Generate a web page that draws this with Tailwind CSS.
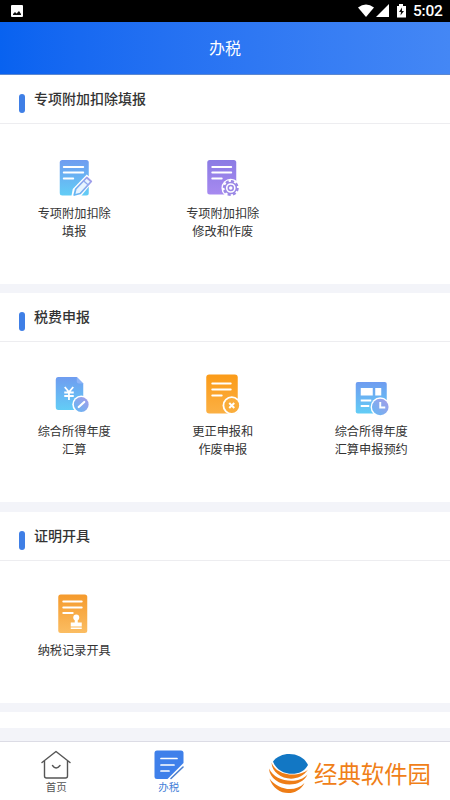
<!DOCTYPE html>
<html lang="zh-CN">
<head>
<meta charset="utf-8">
<meta name="viewport" content="width=device-width, initial-scale=1">
<title>办税</title>
<script src="https://cdn.jsdelivr.net/npm/@tailwindcss/browser@4"></script>
</head>
<body class="w-[450px] h-[800px] overflow-hidden flex flex-col bg-[#f3f4f9] font-['Noto_Sans_CJK_SC',sans-serif] text-[#333]">
<svg class="absolute size-0" aria-hidden="true">
  <defs>
    <linearGradient id="blue" x1="0" y1="0" x2="0" y2="1"><stop offset="0" stop-color="#6f9cf0"/><stop offset="1" stop-color="#62cdf6"/></linearGradient>
    <linearGradient id="violet" x1="0" y1="0" x2="0" y2="1"><stop offset="0" stop-color="#8b7be4"/><stop offset="1" stop-color="#a78af0"/></linearGradient>
    <linearGradient id="orange" x1="0" y1="0" x2="0" y2="1"><stop offset="0" stop-color="#fb9b18"/><stop offset="1" stop-color="#fbb044"/></linearGradient>
    <linearGradient id="amber" x1="0" y1="0" x2="0" y2="1"><stop offset="0" stop-color="#f59a2c"/><stop offset="1" stop-color="#fbbd62"/></linearGradient>
    <linearGradient id="pen" x1="1" y1="0" x2="0" y2="1"><stop offset="0" stop-color="#a79be8"/><stop offset="1" stop-color="#62b8f4"/></linearGradient>
  </defs>
</svg>

<div class="h-[22px] shrink-0 bg-black flex items-center justify-between pl-[11px] pr-[8px]">
  <svg class="w-3 h-3" viewBox="0 0 12 12"><rect width="12" height="12" rx="1" fill="#fff"/><path d="M2 10V9l2-2 1.500 1.500L8 6l2 3v1z" fill="#111"/></svg>
  <div class="flex items-center">
    <svg class="w-[49px] h-[14px]" viewBox="0 0 49 14" fill="#fff"><path d="M0 3.500Q8 -2.500 16 3.500L8 13z"/><path d="M31 0v13H18z"/><path d="M39 2h2V0h4v2h3v11.500h-9z"/><path d="M44 3.500 41 8h2l-.5 3.500L46 7h-2z" fill="#111"/></svg>
    <span class="ml-[6px] w-[29px] text-[15.5px] leading-[22px] font-medium text-white font-['Roboto',sans-serif] tracking-[-0.2px]">5:02</span>
  </div>
</div>

<header class="h-[53px] shrink-0 bg-linear-to-r from-[#0862f0] to-[#4487f5] border-b border-[#5c88d0] flex items-center justify-center text-white text-[16px] leading-none pb-[2px]">办税</header>

<main class="flex flex-col shrink-0">
  <section class="h-[209px] bg-white">
    <div class="h-[49px] border-b border-[#ededf0] flex items-start pl-[19px]">
      <i class="block w-[5.5px] h-[19px] mt-[19px] rounded-full bg-[#3f7fe6]"></i>
      <h2 class="ml-[9.5px] mt-[12px] text-[14px] leading-[22px] font-medium">专项附加扣除填报</h2>
    </div>
    <div class="grid grid-cols-[repeat(3,148.5px)] pt-[30px] text-center text-[12.2px] leading-[18px]">
      <div class="flex flex-col items-center">
        <svg class="w-[50px] h-[48px]" viewBox="49.25 154 50 48"><rect x="60" y="160" width="29" height="35.500" rx="2.500" fill="url(#blue)"/><path d="M64 167h19.500M64 172.500h19.500M64 178.500h9.500" stroke="#fff" stroke-width="1.900" stroke-linecap="round"/><path d="m71.500 197 1.500-8L87 174.500l7 6-13 16z" fill="#fff"/><path d="m74.500 195 1.500-6L87 177.500l4.500 4L80.500 193.500z" fill="#e8f4ff" stroke="url(#pen)" stroke-width="1.800" stroke-linejoin="round"/><path d="m84 181 4.500 4" stroke="#90aaf0" stroke-width="1.400"/></svg>
        <p class="mt-[2px]">专项附加扣除<br>填报</p>
      </div>
      <div class="flex flex-col items-center">
        <svg class="w-[50px] h-[48px]" viewBox="197.750 154 50 48"><rect x="207" y="160" width="29" height="34.500" rx="2.500" fill="url(#violet)"/><path d="M212 167h19M212 172.500h19M212 178.500h9.500" stroke="#fff" stroke-width="1.900" stroke-linecap="round"/><circle cx="230.500" cy="188" r="9.300" fill="#fff"/><circle cx="230.500" cy="188" r="6.600" fill="none" stroke="#9b88e6" stroke-width="2.800" stroke-dasharray="2.960 2.223"/><circle cx="230.500" cy="188" r="5.600" fill="#fff" stroke="#9b88e6" stroke-width="1.500"/><circle cx="230.500" cy="188" r="2.500" fill="#fff" stroke="#9b88e6" stroke-width="1.500"/></svg>
        <p class="mt-[2px]">专项附加扣除<br>修改和作废</p>
      </div>
    </div>
  </section>

  <section class="mt-[9px] h-[209px] bg-white">
    <div class="h-[49px] border-b border-[#ededf0] flex items-start pl-[19px]">
      <i class="block w-[5.5px] h-[19px] mt-[19px] rounded-full bg-[#3f7fe6]"></i>
      <h2 class="ml-[9.5px] mt-[12px] text-[14px] leading-[22px] font-medium">税费申报</h2>
    </div>
    <div class="grid grid-cols-[repeat(3,148.5px)] pt-[30px] text-center text-[12.2px] leading-[17.5px]">
      <div class="flex flex-col items-center">
        <svg class="w-[50px] h-[48px]" viewBox="49.25 372 50 48"><path d="M58.500 377H77l6.500 6.500V407q0 3-3 3h-22q-2.500 0-2.500-3v-27q0-3 2.500-3z" fill="url(#blue)"/><path d="M77 377v4.500q0 2 2 2h4.500z" fill="#8db4f7"/><path d="m65 387 4.200 5 4.300-5M69.200 392v8M64.500 392.500h9.500M64.500 396h9.500" fill="none" stroke="#fff" stroke-width="1.800"/><circle cx="81.500" cy="404.500" r="9" fill="#fff"/><circle cx="81.500" cy="404.500" r="7.400" fill="url(#pen)"/><path d="m79 407 5.500-5" stroke="#fff" stroke-width="2.200" stroke-linecap="round"/></svg>
        <p class="mt-[3px]">综合所得年度<br>汇算</p>
      </div>
      <div class="flex flex-col items-center">
        <svg class="w-[50px] h-[48px]" viewBox="197.750 372 50 48"><rect x="206" y="374.500" width="31.500" height="39" rx="3" fill="url(#orange)"/><path d="M212 383.500h18.500M212 389.500h18.500M212 395.500h9.500" stroke="#fff" stroke-width="1.900" stroke-linecap="round"/><circle cx="231.500" cy="405.500" r="9.200" fill="#fff"/><circle cx="231.500" cy="405.500" r="7.400" fill="#faad3b"/><path d="m229 403 5 5m0-5-5 5" stroke="#fff" stroke-width="2"/></svg>
        <p class="mt-[3px]">更正申报和<br>作废申报</p>
      </div>
      <div class="flex flex-col items-center">
        <svg class="w-[50px] h-[48px]" viewBox="346.25 372 50 48"><rect x="356" y="382" width="31" height="31.500" rx="2" fill="url(#blue)"/><path d="M361 388h12v7.500h-12zM375.500 388h6v7.500h-6z" fill="#fff"/><path d="M361 400.500h10.500M361 406h8.500" stroke="#fff" stroke-width="1.800"/><circle cx="380.500" cy="407" r="9.700" fill="#fff"/><circle cx="380.500" cy="407" r="8.300" fill="url(#pen)"/><path d="M380.500 402v5.500h5" fill="none" stroke="#fff" stroke-width="1.900"/></svg>
        <p class="mt-[3px]">综合所得年度<br>汇算申报预约</p>
      </div>
    </div>
  </section>

  <section class="mt-[10px] h-[191px] bg-white">
    <div class="h-[49px] border-b border-[#ededf0] flex items-start pl-[19px]">
      <i class="block w-[5.5px] h-[19px] mt-[19px] rounded-full bg-[#3f7fe6]"></i>
      <h2 class="ml-[9.5px] mt-[12px] text-[14px] leading-[22px] font-medium">证明开具</h2>
    </div>
    <div class="grid grid-cols-[repeat(3,148.5px)] pt-[30px] text-center text-[12.2px] leading-[18px]">
      <div class="flex flex-col items-center">
        <svg class="w-[50px] h-[48px]" viewBox="49.25 591 50 48"><rect x="58.500" y="594.500" width="29" height="38.500" rx="2.500" fill="url(#amber)"/><path d="M63.500 601.500H82M63.500 607.500H82M63.500 613h9.500" stroke="#fff" stroke-width="1.900" stroke-linecap="round"/><circle cx="76.500" cy="617.500" r="3" fill="#fff"/><path d="M75 619h3v3.500h4v4H71v-4h4zM71 627.500h11v1.500H71z" fill="#fff"/></svg>
        <p class="mt-[2px]">纳税记录开具</p>
      </div>
    </div>
  </section>
  <section class="mt-[9px] h-[16px] bg-white"></section>
</main>

<nav class="mt-[13px] h-[59px] shrink-0 bg-white border-t border-[#dcdce5] grid grid-cols-4 text-[10.5px] leading-[14px] text-center">
  <div class="flex flex-col items-center pt-[8px]">
    <svg class="w-[30px] h-[30px]" viewBox="0 0 30 30" fill="none" stroke="#555" stroke-width="1.400" stroke-linecap="round" stroke-linejoin="round"><path d="M1 12.500 15 1.500l14 11M3.500 11v15q0 2 2 2h19q2 0 2-2V11M11.500 15.500q3.500 5 7.500 0"/></svg>
    <span class="text-[#555]">首页</span>
  </div>
  <div class="flex flex-col items-center pt-[8px]">
    <svg class="w-[30px] h-[30px]" viewBox="0 0 30 30"><path d="M3 .5h24q2.500 0 2.500 2.500v10L13.500 29H3Q.5 29 .5 26.500V3Q.5 .5 3 .5z" fill="#3f80ea"/><path d="M7 8.500h16M7 15h13M7 21h8" stroke="#fff" stroke-width="1.700" stroke-linecap="round"/><path d="m17 28.500 12-11.500" stroke="#4b7fcf" stroke-width="1.600" stroke-linecap="round"/></svg>
    <span class="text-[#4480d8]">办税</span>
  </div>
  <div class="col-span-2 flex items-start pl-[43px] pt-[11px]">
    <svg class="w-[42px] h-[43px] shrink-0" viewBox="0 0 42 43"><path d="M5 8.500C13-2.500 34-1.500 40 12 33 25.500 10 23 5 8.500z" fill="#1277c4"/><path d="M3.500 9.500C4 25 29 33 40 16.500 31 25 8 23 3.500 9.500zM1 15.500c1 18 31 22 38.500 6C30 32 7 29 1 15.500zM1.500 25.500c5 17 27 20 35 4.500C27 40 10 37 1.500 25.500z" fill="#ee7d16"/></svg>
    <span class="ml-[4px] mt-[5px] whitespace-nowrap text-[23.4px] leading-[30px] text-[#f08018]">经典软件园</span>
  </div>
</nav>
</body>
</html>
